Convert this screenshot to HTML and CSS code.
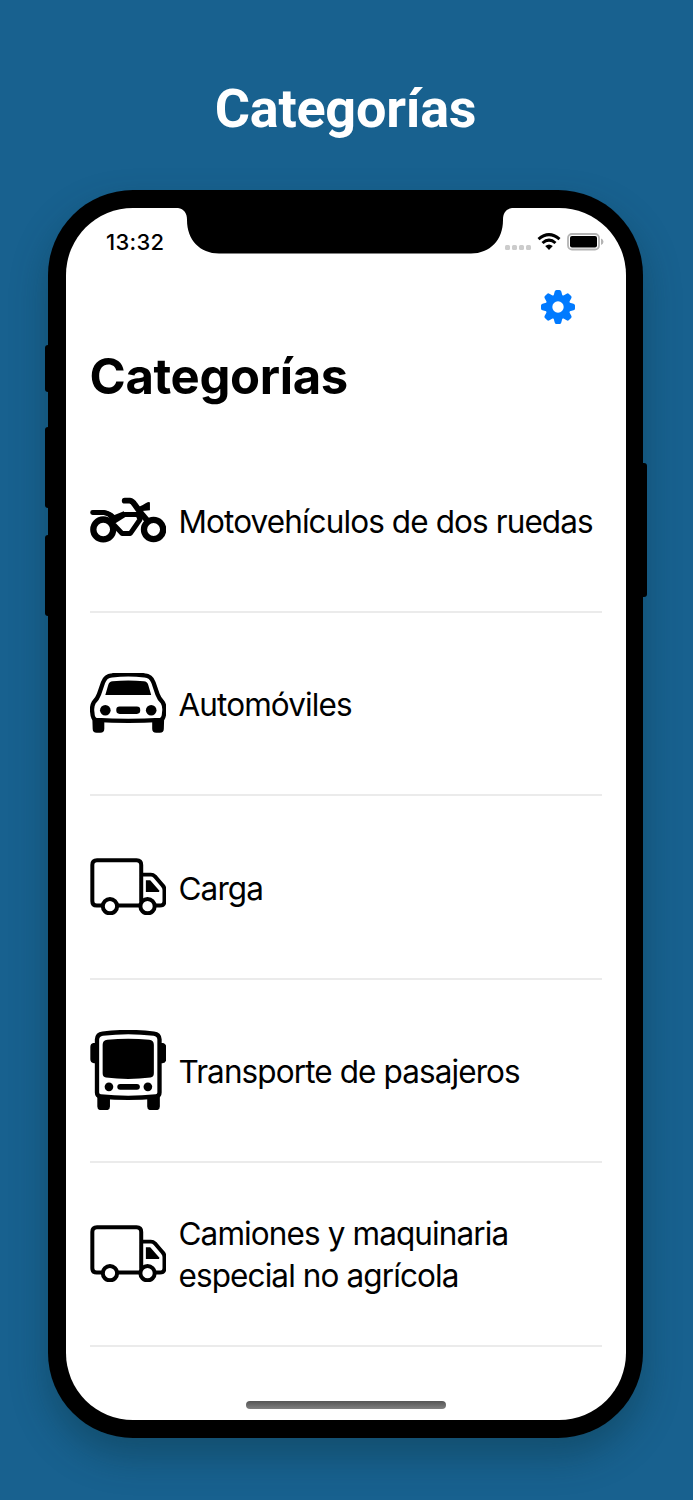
FILE: index.html
```html
<!DOCTYPE html>
<html lang="es">

<head>
    <meta charset="UTF-8">
    <meta name="viewport" content="width=device-width, initial-scale=1.0">
    <title>Categorías</title>
    <link rel="stylesheet" href="styles.css">
</head>

<body>
    <h1 class="title">Categorías</h1>
    <div class="phone">
        <span class="button mute"></span>
        <span class="button up"></span>
        <span class="button down"></span>
        <span class="button power"></span>
        <main class="screen">
            <div class="status">
                <span class="time">13:32</span>
                <svg class="notch" viewBox="0 0 335 46">
                    <path d="M0 0C6 1 9 5 9 12C9 32 22 45.500 41 45.500H293C312 45.500 325 32 325 12C325 5 328 1 334 0Z" />
                </svg>
                <div class="indicators">
                    <svg class="signal" width="26" height="5" viewBox="0 0 26 5">
                        <rect x="0" y="0" width="5" height="5" rx="1.500" />
                        <rect x="7" y="0" width="5" height="5" rx="1.500" />
                        <rect x="14" y="0" width="5" height="5" rx="1.500" />
                        <rect x="21" y="0" width="5" height="5" rx="1.500" />
                    </svg>
                    <svg class="wifi" width="24" height="17" viewBox="0 0 24 17">
                        <path d="M1.500 6.200Q12 -3 22.500 6.200M5.500 10Q12 4.200 18.500 10" />
                        <path class="fill" d="M8.200 13Q12 9.800 15.800 13L12 17Z" />
                    </svg>
                    <svg class="battery" width="37" height="18" viewBox="0 0 37 18">
                        <rect class="case" x="1" y="1" width="31" height="15.500" rx="4" />
                        <rect x="3" y="3" width="27" height="11.500" rx="2" />
                        <path class="tip" d="M34 5.500Q36.500 6.500 36.500 8.700T34 12Z" />
                    </svg>
                </div>
            </div>
            <div class="toolbar">
                <svg class="gear" width="34" height="34" viewBox="-17 -17 34 34">
                    <path id="tooth" d="M-4.500 -11L-3.300 -15.500Q-2.900 -17 -1.500 -17H1.500Q2.900 -17 3.300 -15.500L4.500 -11V11L3.300 15.500Q2.900 17 1.500 17H-1.500Q-2.900 17 -3.300 15.500L-4.500 11Z" />
                    <use href="#tooth" transform="rotate(45)" />
                    <use href="#tooth" transform="rotate(90)" />
                    <use href="#tooth" transform="rotate(135)" />
                    <circle r="12.500" />
                    <circle class="hole" r="5.700" />
                </svg>
            </div>
            <h2>Categorías</h2>
            <ul class="list">
                <li>
                    <svg class="icon" viewBox="0 0 231 138">
                        <circle cx="40" cy="98" r="30" stroke-width="19" />
                        <circle cx="192" cy="98" r="29" stroke-width="19" />
                        <path d="M8 47H42Q58 49 68 62L74 72L104 53H145L151 68L122 110H97L72 84" stroke-width="15" />
                        <path d="M105 11H120Q129 12 135 23L154 49L172 70" stroke-width="18" />
                        <path class="fill" d="M137 32Q150 31 168 19Q181 11 181 18V40L150 43Z" />
                        <path class="fill" d="M38 40Q61 42 74 54L102 43L108 56L76 75L76 88L60 65Z" />
                    </svg>
                    <span>Motovehículos de dos ruedas</span>
                </li>
                <li>
                    <svg class="icon" viewBox="0 0 230 181">
                        <path d="M39 29Q46 8 66 7Q115 1 164 7Q184 8 191 29L203 64Q208 78 219 89Q226 101 223 119Q222 139 212 141Q115 147 18 141Q8 139 7 119Q4 101 11 89Q22 78 27 64Z" stroke-width="13" />
                        <path class="fill" d="M55 35Q58 26 68 25Q115 20 162 25Q172 26 175 35L184 66H46Z" />
                        <circle class="fill" cx="46" cy="112" r="16" />
                        <circle class="fill" cx="184" cy="112" r="16" />
                        <rect class="fill" x="79" y="101" width="72" height="22" rx="10" />
                        <path class="fill" d="M7 137L43 144V168Q43 180 31 180H20Q8 180 8 168ZM223 137L187 144V168Q187 180 199 180H210Q222 180 222 168Z" />
                    </svg>
                    <span>Automóviles</span>
                </li>
                <li>
                    <svg class="icon" viewBox="0 0 230 173">
                        <path d="M36 143H20Q7 143 7 130V21Q7 7 21 7H140Q154 7 154 21V130M84 143H149M154 50H183Q190 50 195 55L218 82Q224 88 224 96V129Q224 143 210 143H197" stroke-width="12" />
                        <path class="fill" d="M168 67H181L208 98V102H168Z" />
                        <circle cx="60" cy="145" r="21.500" stroke-width="12" />
                        <circle cx="173" cy="145" r="21.500" stroke-width="12" />
                    </svg>
                    <span>Carga</span>
                </li>
                <li>
                    <svg class="icon" viewBox="0 0 230 242">
                        <path d="M21 28Q22 13 38 11Q115 1 192 11Q208 13 209 28V188Q209 199 198 200Q115 208 32 200Q21 199 21 188Z" stroke-width="13" />
                        <path class="fill" d="M38 44Q38 30 52 29Q115 23 178 29Q192 30 192 44V130Q192 141 182 143Q115 151 48 143Q38 141 38 130Z" />
                        <circle class="fill" cx="57" cy="171" r="13" />
                        <circle class="fill" cx="174" cy="171" r="13" />
                        <rect class="fill" x="82" y="162" width="68" height="18" rx="9" />
                        <path class="fill" d="M20 39H10Q1 41 1 51V88Q1 99 12 100H20ZM210 39H220Q229 41 229 51V88Q229 99 218 100H210ZM22 197L60 203V230Q60 241 49 241H33Q22 241 22 230ZM210 197L172 203V230Q172 241 183 241H199Q210 241 210 230Z" />
                    </svg>
                    <span>Transporte de pasajeros</span>
                </li>
                <li>
                    <svg class="icon" viewBox="0 0 230 173">
                        <path d="M36 143H20Q7 143 7 130V21Q7 7 21 7H140Q154 7 154 21V130M84 143H149M154 50H183Q190 50 195 55L218 82Q224 88 224 96V129Q224 143 210 143H197" stroke-width="12" />
                        <path class="fill" d="M168 67H181L208 98V102H168Z" />
                        <circle cx="60" cy="145" r="21.500" stroke-width="12" />
                        <circle cx="173" cy="145" r="21.500" stroke-width="12" />
                    </svg>
                    <span>Camiones y maquinaria especial no agrícola</span>
                </li>
            </ul>
            <div class="home"></div>
        </main>
    </div>
</body>

</html>
```
FILE: styles.css
```css
* {
    box-sizing: border-box;
}

body {
    margin: 0;
    height: 1500px;
    overflow: hidden;
    background-color: #18618f;
    font-family: Inter, "Liberation Sans", sans-serif;
    color: black;
}

.title {
    margin: 0;
    padding: 77px 2px 0 0;
    height: 190.4px;
    text-align: center;
    color: white;
    font-family: Roboto, sans-serif;
    font-size: 54px;
    line-height: 64px;
    font-weight: 700;
    letter-spacing: -0.25px;
}

.phone {
    position: relative;
    width: 595px;
    height: 1247.6px;
    margin-left: 48px;
    padding: 17.6px 17.5px 18px 18px;
    border-radius: 85px;
    background-color: black;
    box-shadow: 0 18px 36px rgba(10, 50, 60, 0.4);
}

/* side buttons */
.button {
    position: absolute;
    left: -3px;
    width: 8px;
    border-radius: 3px;
    background-color: black;
}

.mute {
    top: 155px;
    height: 47px;
}

.up {
    top: 237px;
    height: 81px;
}

.down {
    top: 345px;
    height: 81px;
}

.power {
    left: auto;
    right: -3.5px;
    top: 273px;
    height: 134px;
}

.screen {
    height: 1212px;
    border-radius: 67px;
    overflow: hidden;
    background-color: white;
}

.status {
    display: grid;
    grid-template-columns: 112px 335px 1fr;
    height: 70px;
}

.time {
    padding: 20px 0 0 40px;
    font-size: 22px;
    line-height: 29px;
    font-weight: 550;
    letter-spacing: 0.3px;
    white-space: nowrap;
}

.notch {
    width: 335px;
    height: 46px;
}

.indicators {
    display: flex;
    align-items: flex-start;
    padding-top: 25px;
    margin-left: -8.5px;
}

.signal {
    flex: none;
    margin-top: 12.5px;
    fill: #cccccc;
}

.wifi {
    flex: none;
    margin-left: 6px;
    fill: none;
    stroke: black;
    stroke-width: 3;
}

.wifi .fill {
    fill: black;
    stroke: none;
}

.battery {
    flex: none;
    margin-left: 6px;
}

.battery .case {
    fill: white;
    stroke: #b4b4b4;
    stroke-width: 1.8;
}

.battery .tip {
    fill: #b4b4b4;
}

.toolbar {
    display: flex;
    justify-content: flex-end;
    height: 62px;
    padding: 12px 50.5px 0 0;
}

.gear {
    fill: #007aff;
}

.gear .hole {
    fill: white;
}

h2 {
    margin: 0;
    height: 89.6px;
    padding: 7px 0 0 23.5px;
    font-size: 49px;
    line-height: 60px;
    font-weight: 700;
    letter-spacing: -0.35px;
}

.list {
    margin: 0;
    padding: 0 24px 0 23.5px;
    list-style: none;
}

.list li {
    display: flex;
    align-items: center;
    gap: 12.5px;
    height: 183.4px;
    padding-top: 3px;
    border-bottom: 2px solid #ebebeb;
    font-size: 31.5px;
    line-height: 42px;
    letter-spacing: -0.9px;
}

.icon {
    flex: none;
    width: 76.5px;
    margin-bottom: 4px;
    fill: none;
    stroke: black;
    stroke-linecap: round;
    stroke-linejoin: round;
}

.icon .fill {
    fill: black;
    stroke: none;
}

.home {
    width: 200px;
    height: 8px;
    margin: 54.5px auto 0 180px;
    border-radius: 4px;
    background: linear-gradient(#555555, #808080);
}
```
